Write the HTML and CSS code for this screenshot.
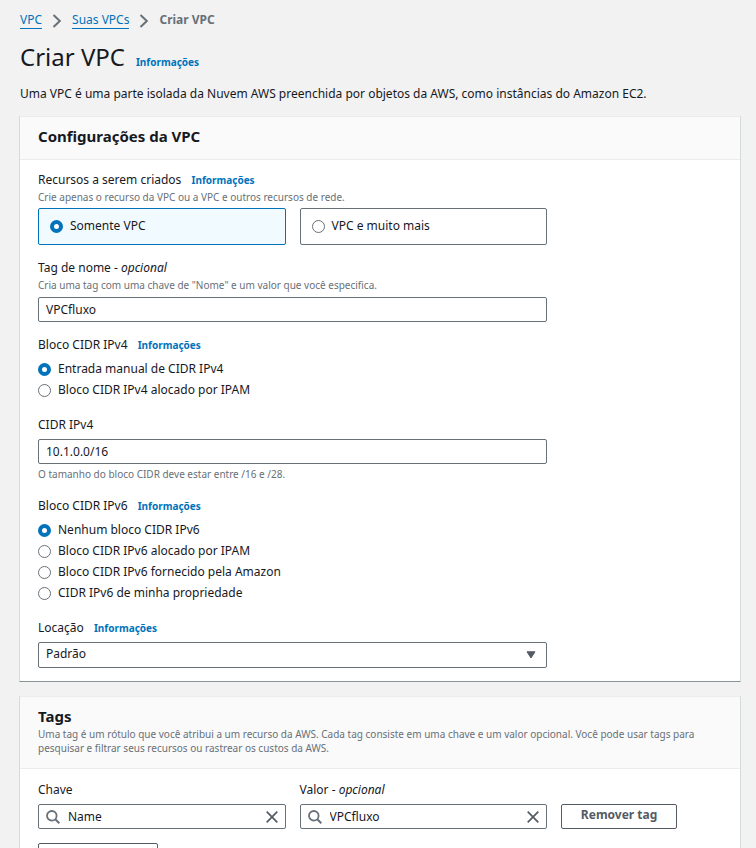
FILE: index.html
```html
<!DOCTYPE html>
<html lang="pt-BR">
<head>
<meta charset="utf-8">
<meta name="viewport" content="width=device-width, initial-scale=1">
<title>Criar VPC</title>
<link rel="stylesheet" href="styles.css">
</head>
<body>
<svg class="sprite" aria-hidden="true">
  <symbol id="chevron" viewBox="0 0 10 14"><path d="M1.500 1 7.800 7l-6.300 6" fill="none" stroke="currentColor" stroke-width="2"/></symbol>
  <symbol id="search" viewBox="0 0 14 14"><circle cx="5.800" cy="5.800" r="4.800" fill="none" stroke="currentColor" stroke-width="1.800"/><path d="m9.300 9.300 4 4" stroke="currentColor" stroke-width="2"/></symbol>
  <symbol id="close" viewBox="0 0 12 12"><path d="m.7.7 10.600 10.600M11.300.7.7 11.300" stroke="currentColor" stroke-width="1.700"/></symbol>
</svg>
<main class="page">
  <nav class="breadcrumb" aria-label="Navegação">
    <a href="#">VPC</a>
    <svg><use href="#chevron"/></svg>
    <a href="#">Suas VPCs</a>
    <svg><use href="#chevron"/></svg>
    <span class="current">Criar VPC</span>
  </nav>
  <header class="title">
    <h1>Criar VPC</h1>
    <a class="info" href="#">Informações</a>
  </header>
  <p class="intro">Uma VPC é uma parte isolada da Nuvem AWS preenchida por objetos da AWS, como instâncias do Amazon EC2.</p>

  <section class="card">
    <header class="card-header"><h2>Configurações da VPC</h2></header>
    <div class="card-body">
      <fieldset class="field">
        <legend class="label">Recursos a serem criados <a class="info" href="#">Informações</a></legend>
        <p class="hint">Crie apenas o recurso da VPC ou a VPC e outros recursos de rede.</p>
        <div class="tiles">
          <label class="tile selected"><input type="radio" name="resources" checked>Somente VPC</label>
          <label class="tile"><input type="radio" name="resources">VPC e muito mais</label>
        </div>
      </fieldset>
      <div class="field">
        <label class="label" for="name-tag">Tag de nome - <em>opcional</em></label>
        <p class="hint">Cria uma tag com uma chave de "Nome" e um valor que você especifica.</p>
        <input class="control after-hint" id="name-tag" type="text" value="VPCfluxo">
      </div>
      <fieldset class="field">
        <legend class="label">Bloco CIDR IPv4 <a class="info" href="#">Informações</a></legend>
        <div class="radios">
          <label><input type="radio" name="ipv4" checked>Entrada manual de CIDR IPv4</label>
          <label><input type="radio" name="ipv4">Bloco CIDR IPv4 alocado por IPAM</label>
        </div>
      </fieldset>
      <div class="field">
        <label class="label" for="cidr">CIDR IPv4</label>
        <input class="control" id="cidr" type="text" value="10.1.0.0/16">
        <p class="hint below">O tamanho do bloco CIDR deve estar entre /16 e /28.</p>
      </div>
      <fieldset class="field">
        <legend class="label">Bloco CIDR IPv6 <a class="info" href="#">Informações</a></legend>
        <div class="radios">
          <label><input type="radio" name="ipv6" checked>Nenhum bloco CIDR IPv6</label>
          <label><input type="radio" name="ipv6">Bloco CIDR IPv6 alocado por IPAM</label>
          <label><input type="radio" name="ipv6">Bloco CIDR IPv6 fornecido pela Amazon</label>
          <label><input type="radio" name="ipv6">CIDR IPv6 de minha propriedade</label>
        </div>
      </fieldset>
      <div class="field">
        <div class="label"><label for="tenancy">Locação</label> <a class="info" href="#">Informações</a></div>
        <div class="select">
          <select class="control" id="tenancy"><option>Padrão</option></select>
          <svg viewBox="0 0 10 8" aria-hidden="true"><path d="M1 .8h8L5 7z" fill="currentColor" stroke="currentColor" stroke-linejoin="round"/></svg>
        </div>
      </div>
    </div>
  </section>

  <section class="card">
    <header class="card-header">
      <h2>Tags</h2>
      <p class="hint">Uma tag é um rótulo que você atribui a um recurso da AWS. Cada tag consiste em uma chave e um valor opcional. Você pode usar tags para pesquisar e filtrar seus recursos ou rastrear os custos da AWS.</p>
    </header>
    <div class="card-body">
      <div class="tag-cell">
        <label class="label" for="tag-key">Chave</label>
        <div class="control search">
          <svg class="glass" aria-hidden="true"><use href="#search"/></svg>
          <input id="tag-key" type="text" value="Name">
          <button type="button" aria-label="Limpar chave"><svg><use href="#close"/></svg></button>
        </div>
      </div>
      <div class="tag-cell">
        <label class="label" for="tag-value">Valor - <em>opcional</em></label>
        <div class="control search">
          <svg class="glass" aria-hidden="true"><use href="#search"/></svg>
          <input id="tag-value" type="text" value="VPCfluxo">
          <button type="button" aria-label="Limpar valor"><svg><use href="#close"/></svg></button>
        </div>
      </div>
      <button class="button" type="button">Remover tag</button>
      <button class="button add" type="button" aria-label="Adicionar nova tag"></button>
    </div>
  </section>
</main>
</body>
</html>
```
FILE: styles.css
```css
* { box-sizing: border-box; }
html { overflow: hidden; height: 100%; }
body {
  margin: 0;
  height: 100%;
  overflow: hidden;
  background: #f2f2f2;
  color: #16191f;
  font: 12px/18px "Noto Sans", "Open Sans", sans-serif;
}
h1, h2, p, fieldset { margin: 0; padding: 0; border: 0; }
legend { padding: 0; }
input, select, button { font: inherit; color: inherit; }
a { color: #0073bb; text-decoration: none; }
.sprite { position: absolute; width: 0; height: 0; }
.page { padding: 11px 15px 0 20px; }

.breadcrumb { display: flex; align-items: center; }
.breadcrumb a { border-bottom: 1px solid #0073bb; line-height: 16px; }
.breadcrumb svg { width: 10px; height: 14px; margin: 2px 10px 0; color: #687078; }
.breadcrumb .current { font-weight: 700; color: #687078; }

.title { display: flex; align-items: baseline; gap: 11px; margin-top: 11px; }
h1 { font-size: 24px; line-height: 34px; font-weight: 400; }
.info { font-size: 10px; font-weight: 700; }
.intro { margin: 11px 0 13px; }

.card {
  margin: 0 0 14px -1px;
  background: #fff;
  border: 1px solid #d5dbdb;
  border-top-color: #eaeded;
  border-bottom-color: #879596;
}
.card-header {
  padding: 9px 18px 13px;
  background: #fafafa;
  border-bottom: 1px solid #eaeded;
}
h2 { font-size: 15px; line-height: 20px; font-weight: 700; }
.card-body {
  display: grid;
  grid-template-columns: 20fr 20fr 13fr;
  gap: 14px;
  padding: 11px 18px 13px;
}
.field { grid-column: span 2; min-width: 0; }
.label { display: block; line-height: 18px; }
.label .info { margin-left: 7px; }
.hint { font-size: 10px; line-height: 16px; color: #687078; }
.card-header .hint { line-height: 14px; padding-top: 1px; }
.hint.below { margin: 2px 0 1px; }

.control {
  display: block;
  width: 100%;
  height: 25px;
  margin-top: 5px;
  padding: 0 7px;
  background: #fff;
  border: 1px solid #687078;
  border-radius: 2px;
}
.control.after-hint { margin-top: 4px; }

input[type="radio"] {
  appearance: none;
  flex: none;
  width: 13px;
  height: 13px;
  margin: 2px 7px 0 0;
  background: #fff;
  border: 1px solid #687078;
  border-radius: 50%;
}
input[type="radio"]:checked { border: 4px solid #0073bb; }

.tiles { display: grid; grid-template-columns: 1fr 1fr; gap: 14px; margin-top: 3px; }
.tile {
  display: flex;
  align-items: center;
  height: 37px;
  padding: 0 11px 2px;
  border: 1px solid #687078;
  border-radius: 2px;
}
.tile.selected { background: #f1faff; border-color: #0073bb; }

.radios { display: grid; margin: 4px 0 2px; }
.radios label { display: flex; align-items: center; height: 21px; }

.select { position: relative; }
.select .control { appearance: none; height: 26px; padding-bottom: 3px; }
.select svg { position: absolute; right: 11px; top: 9px; width: 10px; height: 8px; color: #545b64; }

.tag-cell { padding-top: 1px; }
.search { display: flex; align-items: center; }
.search .glass { flex: none; width: 14px; height: 14px; margin-right: 8px; color: #687078; }
.search input { flex: 1; min-width: 0; height: 20px; padding: 0; border: 0; background: none; outline: 0; }
.search button { display: flex; padding: 0; border: 0; background: none; color: #545b64; }
.search button svg { width: 12px; height: 12px; }

.button {
  align-self: end;
  justify-self: start;
  height: 25px;
  min-width: 116px;
  padding: 0 18px 3px;
  background: #fff;
  border: 1px solid #545b64;
  border-radius: 2px;
  color: #545b64;
  font-weight: 700;
}
.button.add { min-width: 120px; }
```
